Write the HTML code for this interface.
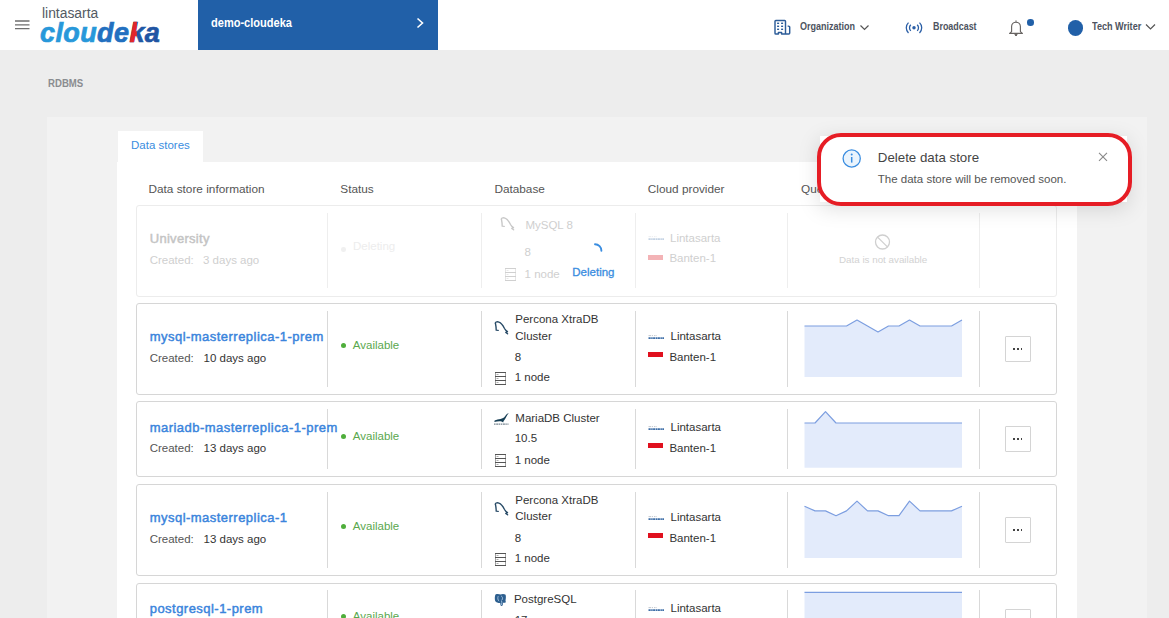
<!DOCTYPE html>
<html><head><meta charset="utf-8"><title>RDBMS</title>
<style>
html,body{margin:0;padding:0;}
body{width:1169px;height:618px;overflow:hidden;position:relative;background:#ededed;font-family:"Liberation Sans",sans-serif;}
.a{position:absolute;}
.t{position:absolute;white-space:nowrap;}
svg.a{overflow:visible;}
</style></head><body>
<div class="a" style="left:0px;top:0px;width:1169px;height:50px;background:#fff;"></div>
<svg class="a" style="left:14px;top:18px;" width="17" height="14" viewBox="0 0 17 14"><path d="M1 3 H15.5 M1 6.9 H15.5 M1 10.7 H15.5" stroke="#6e6e6e" stroke-width="1.3"/></svg>
<div class="t " style="left:41.5px;top:6.00px;font-size:14px;line-height:15.638px;color:#535a63;font-weight:normal;transform:scaleX(0.99);transform-origin:0 0;">lintasarta</div>
<div class="t" style="left:40px;top:17.5px;font-size:27px;line-height:30px;font-weight:bold;font-style:italic;letter-spacing:0.4px;-webkit-text-stroke:0.7px currentColor;"><span style="color:#2898da">clou</span><span style="color:#2270c0">de</span><span style="position:relative;color:#1f58a6">k<span style="position:absolute;left:0;top:0;color:#e3262b;clip-path:inset(0 52% 0 0)">k</span></span><span style="color:#1f55a3">a</span></div>
<div class="a" style="left:198px;top:0px;width:240px;height:50px;background:#2160a8;"></div>
<div class="t " style="left:210.5px;top:17.00px;font-size:12px;line-height:13.404px;color:#fff;font-weight:bold;transform:scaleX(0.92);transform-origin:0 0;">demo-cloudeka</div>
<svg class="a" style="left:414px;top:16px;" width="12" height="14" viewBox="0 0 12 14"><path d="M3.5 2.5 L8.5 7 L3.5 11.5" fill="none" stroke="#fff" stroke-width="1.6"/></svg>
<svg class="a" style="left:770px;top:16px;" width="24" height="22" viewBox="0 0 24 22"><path d="M15.5 18 V5.3 a0.8 0.8 0 0 0 -0.8 -0.8 H5.8 a0.8 0.8 0 0 0 -0.8 0.8 V17.2 a0.8 0.8 0 0 0 0.8 0.8 H8.4 V16.4 H11.6 V18 H18.8 a0.9 0.9 0 0 0 0.9 -0.9 V11.3 a1.2 1.2 0 0 0 -1.2 -1.2 H17.6" fill="none" stroke="#2c5c98" stroke-width="1.45" stroke-linejoin="round"/><g fill="#2c5c98"><rect x="7.1" y="6.6" width="2" height="1.4"/><rect x="11.1" y="6.6" width="2" height="1.4"/><rect x="7.1" y="9.6" width="2" height="1.4"/><rect x="11.1" y="9.6" width="2" height="1.4"/><rect x="7.1" y="12.6" width="2" height="1.4"/><rect x="11.1" y="12.6" width="2" height="1.4"/></g></svg>
<div class="t " style="left:799.6px;top:20.00px;font-size:11px;line-height:12.287px;color:#4d5360;font-weight:bold;transform:scaleX(0.82);transform-origin:0 0;">Organization</div>
<svg class="a" style="left:859px;top:23px;" width="12" height="9" viewBox="0 0 12 9"><path d="M1.5 2.5 L5.5 6.5 L9.5 2.5" fill="none" stroke="#555" stroke-width="1.2"/></svg>
<svg class="a" style="left:904px;top:20px;" width="20" height="16" viewBox="0 0 20 16"><g transform="translate(10 7.8) scale(0.86) translate(-10 -7.8)"><circle cx="10" cy="7.8" r="2" fill="#2a5ea6"/><path d="M6.3 4.2 a5 5 0 0 0 0 7.2 M13.7 4.2 a5 5 0 0 1 0 7.2 M3.6 1.8 a8.3 8.3 0 0 0 0 12 M16.4 1.8 a8.3 8.3 0 0 1 0 12" fill="none" stroke="#2a5ea6" stroke-width="1.5"/></g></svg>
<div class="t " style="left:932.5px;top:20.00px;font-size:11px;line-height:12.287px;color:#4d5360;font-weight:bold;transform:scaleX(0.81);transform-origin:0 0;">Broadcast</div>
<svg class="a" style="left:1007px;top:19px;" width="18" height="18" viewBox="0 0 18 18"><path d="M2.6 14.4 H15.4 L13.4 12.6 V7.6 a4.4 4.4 0 0 0 -8.8 0 V12.6 Z" fill="none" stroke="#686462" stroke-width="1.15" stroke-linejoin="round"/><path d="M7.8 15.6 H10.2 L9 17 Z M9 1.4 V3.2" fill="#686462" stroke="#686462" stroke-width="1"/></svg>
<div class="a" style="left:1027.1px;top:19.2px;width:6.6px;height:6.6px;background:#2160a8;border-radius:50%;"></div>
<div class="a" style="left:1067.7px;top:19.9px;width:15.8px;height:15.8px;background:#2160a8;border-radius:50%;"></div>
<div class="t " style="left:1091.6px;top:20.00px;font-size:11px;line-height:12.287px;color:#4d5360;font-weight:bold;transform:scaleX(0.828);transform-origin:0 0;">Tech Writer</div>
<svg class="a" style="left:1144px;top:22px;" width="13" height="9" viewBox="0 0 13 9"><path d="M2 2.5 L6.5 7 L11 2.5" fill="none" stroke="#555" stroke-width="1.2"/></svg>
<div class="t " style="left:47.5px;top:77.00px;font-size:10.8px;line-height:12.064px;color:#8a8c90;font-weight:bold;transform:scaleX(0.89);transform-origin:0 0;">RDBMS</div>
<div class="a" style="left:47px;top:117px;width:1099.5px;height:501px;background:#f2f2f2;"></div>
<div class="a" style="left:118px;top:131px;width:85px;height:31px;background:#fff;"></div>
<div class="t " style="left:131px;top:139.00px;font-size:11.5px;line-height:12.845px;color:#3a8de0;font-weight:normal;">Data stores</div>
<div class="a" style="left:117px;top:162px;width:960px;height:456px;background:#fff;"></div>
<div class="t " style="left:148.5px;top:183.00px;font-size:11.8px;line-height:13.181px;color:#555;font-weight:normal;">Data store information</div>
<div class="t " style="left:340.3px;top:183.00px;font-size:11.8px;line-height:13.181px;color:#555;font-weight:normal;">Status</div>
<div class="t " style="left:494.4px;top:183.00px;font-size:11.8px;line-height:13.181px;color:#555;font-weight:normal;">Database</div>
<div class="t " style="left:647.8px;top:183.00px;font-size:11.8px;line-height:13.181px;color:#555;font-weight:normal;">Cloud provider</div>
<div class="t " style="left:801px;top:183.00px;font-size:11.8px;line-height:13.181px;color:#555;font-weight:normal;">Query</div>
<div class="a" style="left:136px;top:205px;width:921px;height:92px;box-sizing:border-box;border:1px solid #ececec;border-radius:3px;background:#fff;"></div>
<div class="a" style="left:327px;top:213px;width:1px;height:75px;background:#eeeeee;"></div>
<div class="a" style="left:481px;top:213px;width:1px;height:75px;background:#eeeeee;"></div>
<div class="a" style="left:634.5px;top:213px;width:1px;height:75px;background:#eeeeee;"></div>
<div class="a" style="left:787px;top:213px;width:1px;height:75px;background:#eeeeee;"></div>
<div class="a" style="left:979px;top:213px;width:1px;height:75px;background:#eeeeee;"></div>
<div class="t " style="left:149.7px;top:232.00px;font-size:13px;line-height:14.521px;color:#c4c4c4;font-weight:normal;letter-spacing:0.3px;-webkit-text-stroke:0.45px #c4c4c4;">University</div>
<div class="t " style="left:149.7px;top:254.00px;font-size:11.5px;line-height:12.845px;color:#cfcfcf;font-weight:normal;">Created:</div>
<div class="t " style="left:203px;top:254.00px;font-size:11.5px;line-height:12.845px;color:#cfcfcf;font-weight:normal;">3 days ago</div>
<div class="a" style="left:341px;top:247px;width:4.5px;height:4.5px;background:#f0f0f0;border-radius:50%;"></div>
<div class="t " style="left:353px;top:240.00px;font-size:11.5px;line-height:12.845px;color:#ededed;font-weight:normal;">Deleting</div>
<svg class="a" style="left:500px;top:217px;" width="16" height="14" viewBox="0 0 16 14"><path d="M1.2 2.2 C1.8 0.4 3.5 0.6 5 1.2 C7.5 2 9 4.5 10.5 7.5 C11.3 9 12.5 10 13.5 10.6 L11.8 11.4 L13.6 12.8 M1.4 2 C1.8 4 2.2 6.5 2.2 9.2 L4.2 9.4" fill="none" stroke="#c8c8c8" stroke-width="1.35" stroke-linecap="round" stroke-linejoin="round"/></svg>
<div class="t " style="left:525.4px;top:219.00px;font-size:11.5px;line-height:12.845px;color:#cfcfcf;font-weight:normal;">MySQL 8</div>
<div class="t " style="left:524.6px;top:246.00px;font-size:11.5px;line-height:12.845px;color:#cfcfcf;font-weight:normal;">8</div>
<svg class="a" style="left:505px;top:268px;" width="11" height="13" viewBox="0 0 11 13"><path d="M0.5 0.5 V12.5 M10.5 0.5 V12.5" stroke="#d0d0d0" stroke-width="1" opacity="0.55"/><path d="M0 0.5 H11 M0 4.5 H11 M0 8.5 H11 M0 12.5 H11" stroke="#d0d0d0" stroke-width="1.1"/><path d="M1.5 2.5 H3.5 M1.5 6.5 H3.5 M1.5 10.5 H3.5" stroke="#d0d0d0" stroke-width="0.8" opacity="0.6"/></svg>
<div class="t " style="left:524.6px;top:268.00px;font-size:11.5px;line-height:12.845px;color:#cfcfcf;font-weight:normal;">1 node</div>
<svg class="a" style="left:586px;top:241px;" width="20" height="16" viewBox="0 0 20 16"><path d="M9 3.2 A6.5 6.5 0 0 1 15.4 9.8" fill="none" stroke="#3a8de0" stroke-width="1.9" stroke-linecap="round"/></svg>
<div class="t " style="left:572.3px;top:266.00px;font-size:11.5px;line-height:12.845px;color:#3a8de0;font-weight:normal;-webkit-text-stroke:0.3px #3a8de0;">Deleting</div>
<svg class="a" style="left:648px;top:235px;" width="17" height="6" viewBox="0 0 17 6"><g opacity="0.3"><path d="M0.5 1.6 H3 M3.8 1.6 H5 M6 1.6 H7.5 M8.4 1.6 H9" stroke="#9aa3ad" stroke-width="0.6"/><path d="M0.5 4.1 H16" stroke="#3f6fa8" stroke-width="1.9" stroke-dasharray="2.2 0.5 1.5 0.4"/></g></svg>
<div class="t " style="left:670px;top:232.00px;font-size:11.5px;line-height:12.845px;color:#cfcfcf;font-weight:normal;">Lintasarta</div>
<div class="a" style="left:648px;top:255.3px;width:15px;height:5px;background:#f3b3b6;"></div>
<div class="t " style="left:669.4px;top:252.00px;font-size:11.5px;line-height:12.845px;color:#cfcfcf;font-weight:normal;">Banten-1</div>
<svg class="a" style="left:874px;top:234px;" width="18" height="17" viewBox="0 0 18 17"><circle cx="8.5" cy="8" r="7" fill="none" stroke="#cfcfcf" stroke-width="1.3"/><path d="M3.6 3.1 L13.4 12.9" stroke="#cfcfcf" stroke-width="1.3"/></svg>
<div class="t " style="left:839px;top:255.00px;font-size:9.8px;line-height:10.947px;color:#d2d2d2;font-weight:normal;">Data is not available</div>
<div class="a" style="left:136px;top:303px;width:921px;height:92px;box-sizing:border-box;border:1px solid #d6d6d6;border-radius:3px;background:#fff;"></div>
<div class="a" style="left:327px;top:311px;width:1px;height:76px;background:#d9d9d9;"></div>
<div class="a" style="left:481px;top:311px;width:1px;height:76px;background:#d9d9d9;"></div>
<div class="a" style="left:634.5px;top:311px;width:1px;height:76px;background:#d9d9d9;"></div>
<div class="a" style="left:787px;top:311px;width:1px;height:76px;background:#d9d9d9;"></div>
<div class="a" style="left:979px;top:311px;width:1px;height:76px;background:#d9d9d9;"></div>
<div class="t " style="left:149.7px;top:330.00px;font-size:13px;line-height:14.521px;color:#3a84dc;font-weight:normal;letter-spacing:0.47px;-webkit-text-stroke:0.45px #3a84dc;">mysql-masterreplica-1-prem</div>
<div class="t " style="left:149.7px;top:352.00px;font-size:11.5px;line-height:12.845px;color:#555;font-weight:normal;">Created:</div>
<div class="t " style="left:203.6px;top:352.00px;font-size:11.5px;line-height:12.845px;color:#333;font-weight:normal;">10 days ago</div>
<div class="a" style="left:340.8px;top:343.0px;width:5.2px;height:5.2px;background:#4fae3b;border-radius:50%;"></div>
<div class="t " style="left:352.8px;top:339.00px;font-size:11.5px;line-height:12.845px;color:#5aa84e;font-weight:normal;">Available</div>
<svg class="a" style="left:494px;top:321px;" width="16" height="14" viewBox="0 0 16 14"><path d="M1.2 2.2 C1.8 0.4 3.5 0.6 5 1.2 C7.5 2 9 4.5 10.5 7.5 C11.3 9 12.5 10 13.5 10.6 L11.8 11.4 L13.6 12.8 M1.4 2 C1.8 4 2.2 6.5 2.2 9.2 L4.2 9.4" fill="none" stroke="#274a66" stroke-width="1.35" stroke-linecap="round" stroke-linejoin="round"/></svg>
<div class="t " style="left:515.3px;top:313.00px;font-size:11.5px;line-height:12.845px;color:#333;font-weight:normal;">Percona XtraDB</div>
<div class="t " style="left:515.3px;top:330.00px;font-size:11.5px;line-height:12.845px;color:#333;font-weight:normal;">Cluster</div>
<div class="t " style="left:514.7px;top:351.00px;font-size:11.5px;line-height:12.845px;color:#333;font-weight:normal;">8</div>
<svg class="a" style="left:495px;top:372px;" width="11" height="13" viewBox="0 0 11 13"><path d="M0.5 0.5 V12.5 M10.5 0.5 V12.5" stroke="#555" stroke-width="1" opacity="0.55"/><path d="M0 0.5 H11 M0 4.5 H11 M0 8.5 H11 M0 12.5 H11" stroke="#555" stroke-width="1.1"/><path d="M1.5 2.5 H3.5 M1.5 6.5 H3.5 M1.5 10.5 H3.5" stroke="#555" stroke-width="0.8" opacity="0.6"/></svg>
<div class="t " style="left:514.7px;top:371.00px;font-size:11.5px;line-height:12.845px;color:#333;font-weight:normal;">1 node</div>
<svg class="a" style="left:648px;top:333.8px;" width="17" height="6" viewBox="0 0 17 6"><g opacity="1"><path d="M0.5 1.6 H3 M3.8 1.6 H5 M6 1.6 H7.5 M8.4 1.6 H9" stroke="#9aa3ad" stroke-width="0.6"/><path d="M0.5 4.1 H16" stroke="#3f6fa8" stroke-width="1.9" stroke-dasharray="2.2 0.5 1.5 0.4"/></g></svg>
<div class="t " style="left:670.5px;top:330.00px;font-size:11.5px;line-height:12.845px;color:#333;font-weight:normal;">Lintasarta</div>
<div class="a" style="left:648px;top:352.0px;width:15px;height:5px;background:#e0101e;"></div>
<div class="t " style="left:669.4px;top:351.00px;font-size:11.5px;line-height:12.845px;color:#333;font-weight:normal;">Banten-1</div>
<svg class="a" style="left:800px;top:299px;" width="170" height="80" viewBox="0 0 170 80"><polygon points="4.50,78.00 4.50,27.00 15.00,27.00 25.50,27.00 36.00,27.00 46.50,27.00 57.00,21.00 67.50,27.00 78.00,33.00 88.50,27.00 99.00,27.00 109.50,21.00 120.00,27.00 130.50,27.00 141.00,27.00 151.50,27.00 162.00,21.00 162.00,78.00" fill="#e3ebfb"/><polyline points="4.50,27.00 15.00,27.00 25.50,27.00 36.00,27.00 46.50,27.00 57.00,21.00 67.50,27.00 78.00,33.00 88.50,27.00 99.00,27.00 109.50,21.00 120.00,27.00 130.50,27.00 141.00,27.00 151.50,27.00 162.00,21.00" fill="none" stroke="#7c9ee0" stroke-width="1.2" stroke-linejoin="round"/></svg>
<div class="a" style="left:1005px;top:336px;width:25.5px;height:25.5px;box-sizing:border-box;border:1px solid #d4d4d4;border-radius:1px;background:#fff;"></div>
<div class="a" style="left:1013.4px;top:348px;width:1.7px;height:1.7px;background:#444;"></div>
<div class="a" style="left:1017.1px;top:348px;width:1.7px;height:1.7px;background:#444;"></div>
<div class="a" style="left:1020.8px;top:348px;width:1.7px;height:1.7px;background:#444;"></div>
<div class="a" style="left:136px;top:401px;width:921px;height:76px;box-sizing:border-box;border:1px solid #d6d6d6;border-radius:3px;background:#fff;"></div>
<div class="a" style="left:327px;top:409px;width:1px;height:60px;background:#d9d9d9;"></div>
<div class="a" style="left:481px;top:409px;width:1px;height:60px;background:#d9d9d9;"></div>
<div class="a" style="left:634.5px;top:409px;width:1px;height:60px;background:#d9d9d9;"></div>
<div class="a" style="left:787px;top:409px;width:1px;height:60px;background:#d9d9d9;"></div>
<div class="a" style="left:979px;top:409px;width:1px;height:60px;background:#d9d9d9;"></div>
<div class="t " style="left:149.7px;top:421.00px;font-size:13px;line-height:14.521px;color:#3a84dc;font-weight:normal;letter-spacing:0.47px;-webkit-text-stroke:0.45px #3a84dc;">mariadb-masterreplica-1-prem</div>
<div class="t " style="left:149.7px;top:442.00px;font-size:11.5px;line-height:12.845px;color:#555;font-weight:normal;">Created:</div>
<div class="t " style="left:203.6px;top:442.00px;font-size:11.5px;line-height:12.845px;color:#333;font-weight:normal;">13 days ago</div>
<div class="a" style="left:340.8px;top:434.2px;width:5.2px;height:5.2px;background:#4fae3b;border-radius:50%;"></div>
<div class="t " style="left:352.8px;top:430.00px;font-size:11.5px;line-height:12.845px;color:#5aa84e;font-weight:normal;">Available</div>
<svg class="a" style="left:493px;top:413px;" width="17" height="14" viewBox="0 0 17 14"><path d="M15.8 0.3 C14.5 0.5 13.2 1.5 12.2 3 C11 4.8 9.5 5.5 7.5 6 C5.5 6.4 3.5 6.6 1.6 7.6 L1.4 9 C3.5 8.3 6.5 8.2 8.5 8.4 C9.2 8.6 9.8 9.2 10.2 9.6 L10.6 8 C11.8 6.8 12.8 5 13.6 3.2 C14.2 2 15 1 15.8 0.3 Z" fill="#173f55"/><path d="M1 11.2 H15.5" stroke="#76848f" stroke-width="1.2" stroke-dasharray="1.6 0.6 2 0.5 1.4 0.6"/></svg>
<div class="t " style="left:515.3px;top:412.00px;font-size:11.5px;line-height:12.845px;color:#333;font-weight:normal;">MariaDB Cluster</div>
<div class="t " style="left:514.7px;top:432.00px;font-size:11.5px;line-height:12.845px;color:#333;font-weight:normal;">10.5</div>
<svg class="a" style="left:495px;top:454px;" width="11" height="13" viewBox="0 0 11 13"><path d="M0.5 0.5 V12.5 M10.5 0.5 V12.5" stroke="#555" stroke-width="1" opacity="0.55"/><path d="M0 0.5 H11 M0 4.5 H11 M0 8.5 H11 M0 12.5 H11" stroke="#555" stroke-width="1.1"/><path d="M1.5 2.5 H3.5 M1.5 6.5 H3.5 M1.5 10.5 H3.5" stroke="#555" stroke-width="0.8" opacity="0.6"/></svg>
<div class="t " style="left:514.7px;top:454.00px;font-size:11.5px;line-height:12.845px;color:#333;font-weight:normal;">1 node</div>
<svg class="a" style="left:648px;top:425px;" width="17" height="6" viewBox="0 0 17 6"><g opacity="1"><path d="M0.5 1.6 H3 M3.8 1.6 H5 M6 1.6 H7.5 M8.4 1.6 H9" stroke="#9aa3ad" stroke-width="0.6"/><path d="M0.5 4.1 H16" stroke="#3f6fa8" stroke-width="1.9" stroke-dasharray="2.2 0.5 1.5 0.4"/></g></svg>
<div class="t " style="left:670.5px;top:421.00px;font-size:11.5px;line-height:12.845px;color:#333;font-weight:normal;">Lintasarta</div>
<div class="a" style="left:648px;top:443.3px;width:15px;height:5px;background:#e0101e;"></div>
<div class="t " style="left:669.4px;top:442.00px;font-size:11.5px;line-height:12.845px;color:#333;font-weight:normal;">Banten-1</div>
<svg class="a" style="left:800px;top:397px;" width="170" height="80" viewBox="0 0 170 80"><polygon points="4.50,70.70 4.50,26.00 15.00,26.00 25.50,14.60 36.00,26.00 46.50,26.00 57.00,26.00 67.50,26.00 78.00,26.00 88.50,26.00 99.00,26.00 109.50,26.00 120.00,26.00 130.50,26.00 141.00,26.00 151.50,26.00 162.00,26.00 162.00,70.70" fill="#e3ebfb"/><polyline points="4.50,26.00 15.00,26.00 25.50,14.60 36.00,26.00 46.50,26.00 57.00,26.00 67.50,26.00 78.00,26.00 88.50,26.00 99.00,26.00 109.50,26.00 120.00,26.00 130.50,26.00 141.00,26.00 151.50,26.00 162.00,26.00" fill="none" stroke="#7c9ee0" stroke-width="1.2" stroke-linejoin="round"/></svg>
<div class="a" style="left:1005px;top:426px;width:25.5px;height:25.5px;box-sizing:border-box;border:1px solid #d4d4d4;border-radius:1px;background:#fff;"></div>
<div class="a" style="left:1013.4px;top:438px;width:1.7px;height:1.7px;background:#444;"></div>
<div class="a" style="left:1017.1px;top:438px;width:1.7px;height:1.7px;background:#444;"></div>
<div class="a" style="left:1020.8px;top:438px;width:1.7px;height:1.7px;background:#444;"></div>
<div class="a" style="left:136px;top:484px;width:921px;height:92px;box-sizing:border-box;border:1px solid #d6d6d6;border-radius:3px;background:#fff;"></div>
<div class="a" style="left:327px;top:492px;width:1px;height:76px;background:#d9d9d9;"></div>
<div class="a" style="left:481px;top:492px;width:1px;height:76px;background:#d9d9d9;"></div>
<div class="a" style="left:634.5px;top:492px;width:1px;height:76px;background:#d9d9d9;"></div>
<div class="a" style="left:787px;top:492px;width:1px;height:76px;background:#d9d9d9;"></div>
<div class="a" style="left:979px;top:492px;width:1px;height:76px;background:#d9d9d9;"></div>
<div class="t " style="left:149.7px;top:511.00px;font-size:13px;line-height:14.521px;color:#3a84dc;font-weight:normal;letter-spacing:0.47px;-webkit-text-stroke:0.45px #3a84dc;">mysql-masterreplica-1</div>
<div class="t " style="left:149.7px;top:533.00px;font-size:11.5px;line-height:12.845px;color:#555;font-weight:normal;">Created:</div>
<div class="t " style="left:203.6px;top:533.00px;font-size:11.5px;line-height:12.845px;color:#333;font-weight:normal;">13 days ago</div>
<div class="a" style="left:340.8px;top:524.0px;width:5.2px;height:5.2px;background:#4fae3b;border-radius:50%;"></div>
<div class="t " style="left:352.8px;top:520.00px;font-size:11.5px;line-height:12.845px;color:#5aa84e;font-weight:normal;">Available</div>
<svg class="a" style="left:494px;top:502px;" width="16" height="14" viewBox="0 0 16 14"><path d="M1.2 2.2 C1.8 0.4 3.5 0.6 5 1.2 C7.5 2 9 4.5 10.5 7.5 C11.3 9 12.5 10 13.5 10.6 L11.8 11.4 L13.6 12.8 M1.4 2 C1.8 4 2.2 6.5 2.2 9.2 L4.2 9.4" fill="none" stroke="#274a66" stroke-width="1.35" stroke-linecap="round" stroke-linejoin="round"/></svg>
<div class="t " style="left:515.3px;top:494.00px;font-size:11.5px;line-height:12.845px;color:#333;font-weight:normal;">Percona XtraDB</div>
<div class="t " style="left:515.3px;top:510.00px;font-size:11.5px;line-height:12.845px;color:#333;font-weight:normal;">Cluster</div>
<div class="t " style="left:514.7px;top:532.00px;font-size:11.5px;line-height:12.845px;color:#333;font-weight:normal;">8</div>
<svg class="a" style="left:495px;top:553px;" width="11" height="13" viewBox="0 0 11 13"><path d="M0.5 0.5 V12.5 M10.5 0.5 V12.5" stroke="#555" stroke-width="1" opacity="0.55"/><path d="M0 0.5 H11 M0 4.5 H11 M0 8.5 H11 M0 12.5 H11" stroke="#555" stroke-width="1.1"/><path d="M1.5 2.5 H3.5 M1.5 6.5 H3.5 M1.5 10.5 H3.5" stroke="#555" stroke-width="0.8" opacity="0.6"/></svg>
<div class="t " style="left:514.7px;top:552.00px;font-size:11.5px;line-height:12.845px;color:#333;font-weight:normal;">1 node</div>
<svg class="a" style="left:648px;top:514.8px;" width="17" height="6" viewBox="0 0 17 6"><g opacity="1"><path d="M0.5 1.6 H3 M3.8 1.6 H5 M6 1.6 H7.5 M8.4 1.6 H9" stroke="#9aa3ad" stroke-width="0.6"/><path d="M0.5 4.1 H16" stroke="#3f6fa8" stroke-width="1.9" stroke-dasharray="2.2 0.5 1.5 0.4"/></g></svg>
<div class="t " style="left:670.5px;top:511.00px;font-size:11.5px;line-height:12.845px;color:#333;font-weight:normal;">Lintasarta</div>
<div class="a" style="left:648px;top:533.0px;width:15px;height:5px;background:#e0101e;"></div>
<div class="t " style="left:669.4px;top:532.00px;font-size:11.5px;line-height:12.845px;color:#333;font-weight:normal;">Banten-1</div>
<svg class="a" style="left:800px;top:480px;" width="170" height="80" viewBox="0 0 170 80"><polygon points="4.50,78.10 4.50,26.20 15.00,30.90 25.50,30.90 36.00,35.70 46.50,30.90 57.00,21.10 67.50,30.90 78.00,30.90 88.50,35.70 99.00,35.70 109.50,21.10 120.00,30.90 130.50,30.90 141.00,30.90 151.50,30.90 162.00,26.20 162.00,78.10" fill="#e3ebfb"/><polyline points="4.50,26.20 15.00,30.90 25.50,30.90 36.00,35.70 46.50,30.90 57.00,21.10 67.50,30.90 78.00,30.90 88.50,35.70 99.00,35.70 109.50,21.10 120.00,30.90 130.50,30.90 141.00,30.90 151.50,30.90 162.00,26.20" fill="none" stroke="#7c9ee0" stroke-width="1.2" stroke-linejoin="round"/></svg>
<div class="a" style="left:1005px;top:517px;width:25.5px;height:25.5px;box-sizing:border-box;border:1px solid #d4d4d4;border-radius:1px;background:#fff;"></div>
<div class="a" style="left:1013.4px;top:529px;width:1.7px;height:1.7px;background:#444;"></div>
<div class="a" style="left:1017.1px;top:529px;width:1.7px;height:1.7px;background:#444;"></div>
<div class="a" style="left:1020.8px;top:529px;width:1.7px;height:1.7px;background:#444;"></div>
<div class="a" style="left:136px;top:583px;width:921px;height:92px;box-sizing:border-box;border:1px solid #d6d6d6;border-radius:3px;background:#fff;"></div>
<div class="a" style="left:327px;top:590px;width:1px;height:28px;background:#d9d9d9;"></div>
<div class="a" style="left:481px;top:590px;width:1px;height:28px;background:#d9d9d9;"></div>
<div class="a" style="left:634.5px;top:590px;width:1px;height:28px;background:#d9d9d9;"></div>
<div class="a" style="left:787px;top:590px;width:1px;height:28px;background:#d9d9d9;"></div>
<div class="a" style="left:979px;top:590px;width:1px;height:28px;background:#d9d9d9;"></div>
<div class="t " style="left:149.7px;top:602.00px;font-size:13px;line-height:14.521px;color:#3a84dc;font-weight:normal;letter-spacing:0.47px;-webkit-text-stroke:0.45px #3a84dc;">postgresql-1-prem</div>
<div class="a" style="left:340.8px;top:614px;width:5.2px;height:5.2px;background:#4fae3b;border-radius:50%;"></div>
<div class="t " style="left:352.8px;top:610.00px;font-size:11.5px;line-height:12.845px;color:#5aa84e;font-weight:normal;">Available</div>
<svg class="a" style="left:494px;top:593px;" width="13" height="14" viewBox="0 0 13 14"><path d="M1.5 1.4 C3.5 0.6 5.5 1.2 6.5 1.5 C8 0.8 10.5 0.8 11.6 1.8 C12.2 3.5 11.8 6 11.5 7.5 C11.8 8.5 12 9.5 11 9.8 C10 10 9.5 9.5 9 10 L8.8 12 C8.2 13.2 7 13.2 6.5 12.3 L6.2 10 C4 10 2 9.5 1.2 8 C0.6 6 0.6 3 1.5 1.4 Z" fill="#2d5f8f"/><path d="M4.2 3.2 C3.5 5 3.8 7 5 8.2 M7.2 3 C8.5 3.5 9 5.5 8 7 M7.5 7.5 C8 9 7.8 10.5 7.6 12" fill="none" stroke="#a9c6e3" stroke-width="0.9"/></svg>
<div class="t " style="left:513.9px;top:593.00px;font-size:11.5px;line-height:12.845px;color:#333;font-weight:normal;">PostgreSQL</div>
<div class="t " style="left:514.7px;top:614.00px;font-size:11.5px;line-height:12.845px;color:#333;font-weight:normal;">17</div>
<svg class="a" style="left:648px;top:605.5px;" width="17" height="6" viewBox="0 0 17 6"><g opacity="1"><path d="M0.5 1.6 H3 M3.8 1.6 H5 M6 1.6 H7.5 M8.4 1.6 H9" stroke="#9aa3ad" stroke-width="0.6"/><path d="M0.5 4.1 H16" stroke="#3f6fa8" stroke-width="1.9" stroke-dasharray="2.2 0.5 1.5 0.4"/></g></svg>
<div class="t " style="left:670.5px;top:602.00px;font-size:11.5px;line-height:12.845px;color:#333;font-weight:normal;">Lintasarta</div>
<svg class="a" style="left:800px;top:588px;" width="170" height="40" viewBox="0 0 170 40"><rect x="4.5" y="4.3" width="157.5" height="40" fill="#e3ebfb"/><path d="M4.5 4.3 H162" stroke="#7c9ee0" stroke-width="1.2"/></svg>
<div class="a" style="left:1005px;top:608.5px;width:25.5px;height:25.5px;box-sizing:border-box;border:1px solid #d4d4d4;border-radius:1px;background:#fff;"></div>
<div class="a" style="left:819.5px;top:136px;width:307.5px;height:65.5px;background:#fff;box-shadow:0 5px 22px rgba(0,0,0,0.15);"></div>
<div class="a" style="left:817px;top:133px;width:315px;height:73px;box-sizing:border-box;border:4.5px solid #e61d25;border-radius:24px;background:#fff;"></div>
<svg class="a" style="left:841px;top:148px;" width="22" height="22" viewBox="0 0 22 22"><circle cx="10.7" cy="10.5" r="8.6" fill="#eaf4fd" stroke="#3a8de0" stroke-width="1.3"/><circle cx="10.7" cy="6.6" r="1" fill="#3a8de0"/><path d="M10.7 9 V14.6" stroke="#3a8de0" stroke-width="1.5"/></svg>
<div class="t " style="left:877.8px;top:151.00px;font-size:13.3px;line-height:14.856px;color:#444;font-weight:normal;">Delete data store</div>
<div class="t " style="left:877.8px;top:173.00px;font-size:11.5px;line-height:12.845px;color:#555;font-weight:normal;">The data store will be removed soon.</div>
<svg class="a" style="left:1097px;top:151px;" width="12" height="12" viewBox="0 0 12 12"><path d="M2 1.8 L10 9.8 M10 1.8 L2 9.8" stroke="#888" stroke-width="1.1"/></svg>
</body></html>
